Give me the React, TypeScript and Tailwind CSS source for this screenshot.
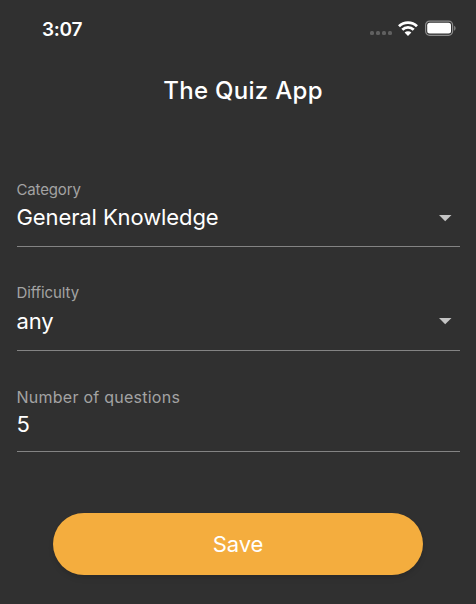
import type { ReactNode } from 'react'

function StatusBar() {
  return (
    <div className="flex h-14 items-center justify-between pl-[42px] pr-5 text-white">
      <span className="mt-[3px] text-[19px] font-semibold leading-6 tracking-[-0.3px]">3:07</span>
      <div className="flex items-center">
        <div className="mr-[6px] mt-[10px] flex gap-[2px]">
          <span className="size-1 rounded-[1.5px] bg-[#606060]" />
          <span className="size-1 rounded-[1.5px] bg-[#606060]" />
          <span className="size-1 rounded-[1.5px] bg-[#606060]" />
          <span className="size-1 rounded-[1.5px] bg-[#606060]" />
        </div>
        <svg className="mr-[7px] h-[15px] w-5" viewBox="0 0 20 15" fill="none" stroke="currentColor" strokeWidth="2.8">
          <path d="M1 5.2a13 13 0 0 1 18 0M4.3 8.7a8.2 8.2 0 0 1 11.4 0" />
          <path d="M10 15L6.6 11.6a4.8 4.8 0 0 1 6.8 0z" fill="currentColor" stroke="none" />
        </svg>
        <svg className="h-4 w-[31px]" viewBox="0 0 31 16" fill="none">
          <rect x="0.6" y="1.1" width="27" height="14.2" rx="4" stroke="#8b8b8b" strokeWidth="1.2" />
          <rect x="2.2" y="2.8" width="23.8" height="10.8" rx="2.5" fill="currentColor" />
          <path d="M29.2 5.7v5c1.8-.8 1.8-4.2 0-5z" fill="#8b8b8b" />
        </svg>
      </div>
    </div>
  )
}

function Field({ label, labelClass, className, children }: { label: string; labelClass: string; className: string; children: ReactNode }) {
  return (
    <div className={`border-b border-[#838383] ${className}`}>
      <div className={`leading-5 text-[#a3a3a3] ${labelClass}`}>{label}</div>
      <div className="flex h-9 items-center justify-between pr-2 text-[22px] tracking-[-0.1px] text-white">{children}</div>
    </div>
  )
}

function Arrow() {
  return (
    <svg className="h-[7px] w-[13px]" viewBox="0 0 13 7" fill="#c4c4c4">
      <path d="M0 0h12.500L6.200 6.300z" />
    </svg>
  )
}

export default function App() {
  return (
    <div className="h-[604px] w-[476px] overflow-hidden bg-[#303030] font-['Inter',sans-serif]">
      <StatusBar />
      <h1 className="mt-[19px] pl-[10px] text-center text-[24px] font-medium leading-8 tracking-[0.3px] text-white">The Quiz App</h1>
      <div className="mt-[72px] px-[16.5px]">
        <Field label="Category" labelClass="text-[15px] tracking-[-0.15px] pt-px" className="h-[68px]">
          <span className="-mt-[2px]">General Knowledge</span>
          <Arrow />
        </Field>
        <Field label="Difficulty" labelClass="text-[15px] tracking-[-0.1px]" className="mt-9 h-[68px]">
          <span>any</span>
          <Arrow />
        </Field>
        <Field label="Number of questions" labelClass="text-[16px] tracking-[0.25px]" className="mt-9 h-[65px]">
          <span className="-mt-[2px]">5</span>
        </Field>
      </div>
      <button className="mx-auto mt-[61px] block h-[62px] w-[370px] rounded-full bg-[#f4ad3e] text-[22px] tracking-[-0.1px] text-white shadow-md">
        Save
      </button>
    </div>
  )
}
